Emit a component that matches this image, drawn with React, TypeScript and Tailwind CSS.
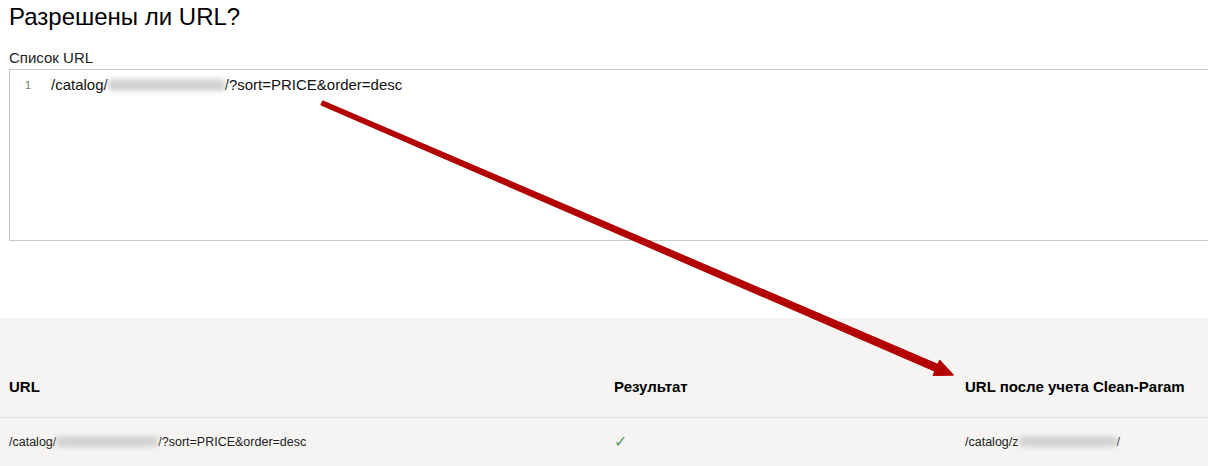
import React from "react";

const font = { fontFamily: '"Liberation Sans", Arial, sans-serif' };

function Blur({ className }: { className: string }) {
  return (
    <span
      className={`inline-block align-middle bg-[#d2d2d2] blur-[2.5px] rounded-sm ${className}`}
    />
  );
}

export default function App() {
  return (
    <div
      className="relative w-[1208px] h-[466px] overflow-hidden bg-white text-black"
      style={font}
    >
      <div className="h-[49px] pl-[9px] pt-[2px]">
        <h1 className="text-[24px] leading-[30px] font-normal">Разрешены ли URL?</h1>
      </div>
      <div className="pl-[9px] text-[15px] leading-[18px] text-[#222]">Список URL</div>
      <div className="h-[2px]" />
      <div className="ml-[9px] w-[1220px] h-[172px] border border-[#c9c9c9] bg-white pt-[5px]">
        <div className="flex items-center leading-[20px]">
          <span className="w-[41px] pl-[15px] text-[11px] text-[#777]">1</span>
          <span className="text-[15px] text-[#111]">
            /catalog/<Blur className="w-[117px] h-[12px] -mt-[2px]" />/?sort=PRICE&amp;order=desc
          </span>
        </div>
      </div>

      <div className="mt-[77px] bg-[#f5f4f2] h-[148px]">
        <div className="grid grid-cols-[605px_351px_1fr] pl-[9px] pt-[59px] pb-[20px] border-b border-[#e2e0dd] text-[15px] leading-[20px] font-bold">
          <div>URL</div>
          <div>Результат</div>
          <div>URL после учета Clean-Param</div>
        </div>
        <div className="grid grid-cols-[605px_351px_1fr] pl-[9px] pt-[14px] text-[12.5px] leading-[20px] text-[#222]">
          <div>
            /catalog/<Blur className="w-[102px] h-[11px] -mt-[2px]" />/?sort=PRICE&amp;order=desc
          </div>
          <div className="text-[16px] leading-[20px] text-[#5c9c6c]">✓</div>
          <div>
            /catalog/z<Blur className="w-[98px] h-[11px] -mt-[2px]" />/
          </div>
        </div>
      </div>

      <svg
        className="absolute inset-0 pointer-events-none"
        width="1208"
        height="466"
        viewBox="0 0 1208 466"
      >
        <polygon
          points="322.8,101.2 937.9,364.7 939.7,360.6 953,375 933.3,375.2 935.1,371.1 321.2,104.8"
          fill="#b30000"
          stroke="#b30000"
          strokeWidth="1.5"
          strokeLinejoin="round"
        />
      </svg>
    </div>
  );
}
